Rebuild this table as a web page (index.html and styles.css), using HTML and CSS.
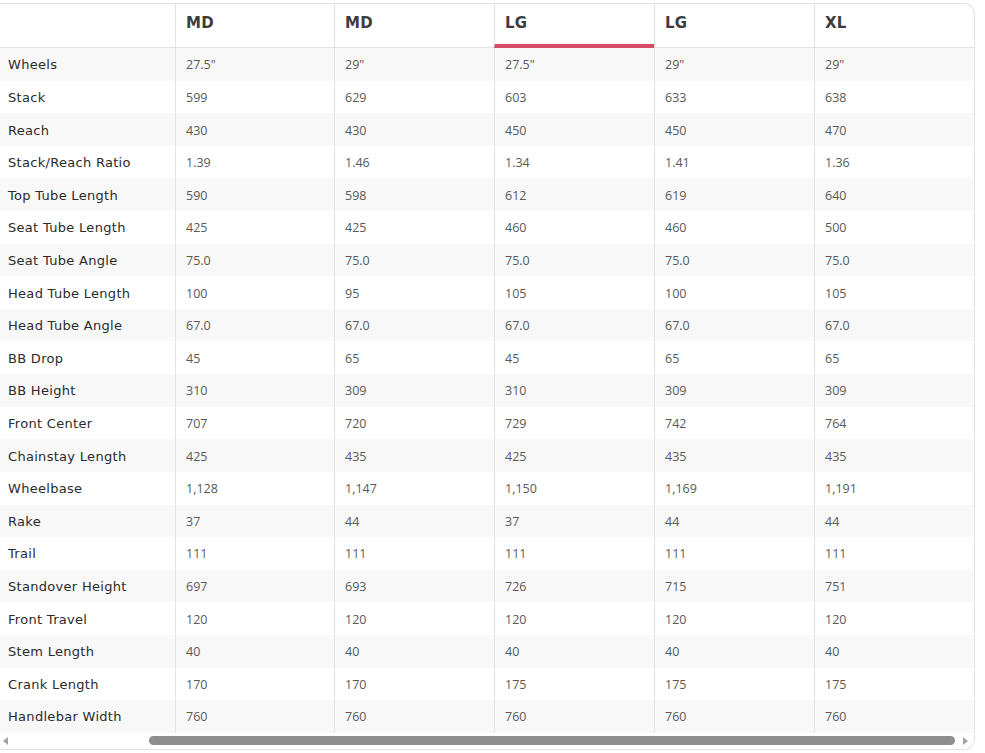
FILE: index.html
```html
<!DOCTYPE html>
<html>
<head>
<meta charset="utf-8">
<link rel="stylesheet" href="styles.css">
</head>
<body>
<div class="wrap">
  <div class="grid">
    <div class="hcell first"></div>
    <div class="hcell">MD</div>
    <div class="hcell">MD</div>
    <div class="hcell active">LG</div>
    <div class="hcell">LG</div>
    <div class="hcell">XL</div>
  </div>
  <div class="body" id="body"></div>
  <div class="scrollbar">
    <span class="arrow left"></span>
    <div class="track"><div class="thumb"></div></div>
    <span class="arrow right"></span>
  </div>
</div>
<script>
var rows = [
["Wheels","27.5\"","29\"","27.5\"","29\"","29\""],
["Stack","599","629","603","633","638"],
["Reach","430","430","450","450","470"],
["Stack/Reach Ratio","1.39","1.46","1.34","1.41","1.36"],
["Top Tube Length","590","598","612","619","640"],
["Seat Tube Length","425","425","460","460","500"],
["Seat Tube Angle","75.0","75.0","75.0","75.0","75.0"],
["Head Tube Length","100","95","105","100","105"],
["Head Tube Angle","67.0","67.0","67.0","67.0","67.0"],
["BB Drop","45","65","45","65","65"],
["BB Height","310","309","310","309","309"],
["Front Center","707","720","729","742","764"],
["Chainstay Length","425","435","425","435","435"],
["Wheelbase","1,128","1,147","1,150","1,169","1,191"],
["Rake","37","44","37","44","44"],
["Trail","111","111","111","111","111"],
["Standover Height","697","693","726","715","751"],
["Front Travel","120","120","120","120","120"],
["Stem Length","40","40","40","40","40"],
["Crank Length","170","170","175","175","175"],
["Handlebar Width","760","760","760","760","760"]
];
var body = document.getElementById('body');
rows.forEach(function(r, i){
  var row = document.createElement('div');
  row.className = 'grid row' + (i % 2 === 0 ? ' alt' : '');
  r.forEach(function(v, j){
    var c = document.createElement('div');
    c.className = j === 0 ? 'cell label' : 'cell';
    c.textContent = v;
    row.appendChild(c);
  });
  body.appendChild(row);
});
</script>
</body>
</html>
```
FILE: styles.css
```css
html, body {
  margin: 0;
  padding: 0;
  background: #fff;
}
body {
  font-family: "DejaVu Sans", "Open Sans", sans-serif;
}
.wrap {
  width: 974px;
  margin-top: 3px;
  border: 1px solid #e2e2e2;
  border-left: none;
  border-radius: 0 11px 11px 0;
  overflow: hidden;
}
.grid {
  display: grid;
  grid-template-columns: 175px 159px 160px 160px 160px 160px;
}
.hcell {
  height: 44px;
  box-sizing: border-box;
  padding: 0 0 5px 10px;
  display: flex;
  align-items: center;
  font-weight: 700;
  font-size: 15px;
  letter-spacing: 0.3px;
  color: #3d3d3d;
  border-left: 1px solid #e3e3e3;
  border-bottom: 1px solid #e3e3e3;
}
.hcell.first {
  border-left: none;
}
.hcell.active {
  border-bottom: 4px solid #d64b66;
  box-shadow: inset 0 -1px 0 #fff;
  padding-bottom: 2px;
}
.row {
  height: 32.62px;
}
.row.alt {
  background: #f8f8f8;
}
.cell {
  display: flex;
  align-items: center;
  padding: 1px 0 0 10px;
  font-family: "Open Sans", "Noto Sans", sans-serif;
  font-size: 12.5px;
  color: #595959;
  border-left: 1px solid #e3e3e3;
}
.cell.label {
  border-left: none;
  padding-left: 8px;
  font-family: "DejaVu Sans", sans-serif;
  font-size: 13px;
  letter-spacing: 0.3px;
  color: #2b2b2b;
}
.scrollbar {
  height: 16px;
  display: flex;
  align-items: center;
  background: #fff;
}
.track {
  flex: 1;
  display: flex;
  justify-content: flex-end;
  padding-left: 136px;
}
.thumb {
  width: 100%;
  height: 9px;
  border-radius: 5px;
  background: #8e8e8e;
}
.arrow {
  width: 0;
  height: 0;
  border-top: 4px solid transparent;
  border-bottom: 4px solid transparent;
}
.arrow.left {
  margin: 0 5px 0 3px;
  border-right: 5px solid #a3a3a3;
}
.arrow.right {
  margin: 0 6px 0 8px;
  border-left: 5px solid #a3a3a3;
}
```
